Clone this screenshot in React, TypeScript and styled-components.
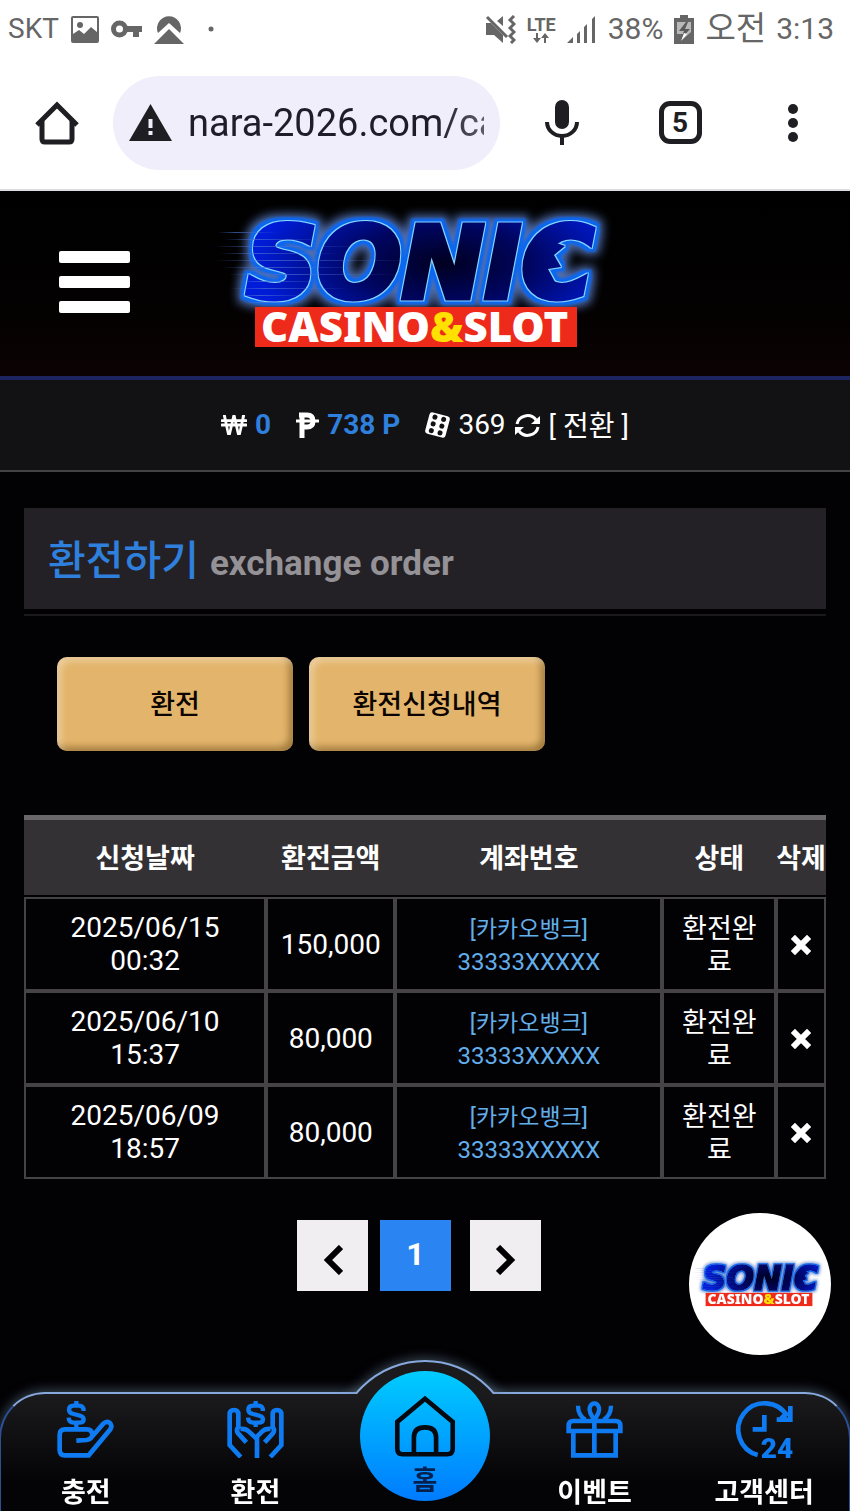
import React, { useId } from 'react';
import styled, { createGlobalStyle } from 'styled-components';
import { FaWonSign } from 'react-icons/fa';

const GlobalStyle = createGlobalStyle`
  *, *::before, *::after { box-sizing: border-box; }
  body {
    margin: 0;
    background: #020104;
    color: #fff;
    font-family: Roboto, "Noto Sans CJK KR", sans-serif;
    font-size: 28px;
  }
  button, input { font: inherit; color: inherit; }
  button { border: 0; padding: 0; background: none; cursor: pointer; }
  a { color: inherit; text-decoration: none; }
  svg { display: block; }
`;

/* ---------- phone status bar and browser toolbar ---------- */

const BrowserChrome = styled.header`
  background: #fff;
  border-bottom: 2px solid #dcdde0;
`;

const StatusBar = styled.div`
  display: flex;
  align-items: center;
  justify-content: space-between;
  height: 58px;
  padding: 0 16px 0 8px;
  color: #666;
  font-size: 30px;
  line-height: 58px;
`;

const StatusGroup = styled.div<{ $gap: number }>`
  display: flex;
  align-items: center;
  gap: ${(p) => p.$gap}px;
`;

const Carrier = styled.span`
  font-size: 28px;
`;

const NetworkType = styled.span`
  display: flex;
  flex-direction: column;
  align-items: center;
  font-size: 18px;
  font-weight: 700;
  line-height: 17px;
`;

const Clock = styled.span`
  display: flex;
  gap: 10px;
`;

const Meridiem = styled.span`
  font-size: 33px;
`;

const Toolbar = styled.div`
  display: flex;
  align-items: center;
  height: 131px;
  padding-bottom: 2px;
  color: #1f1f23;
`;

const ToolButton = styled.button<{ $width: number }>`
  display: flex;
  flex: none;
  align-items: center;
  justify-content: center;
  width: ${(p) => p.$width}px;
  height: 94px;
`;

const AddressBar = styled.div`
  display: flex;
  flex: 1;
  align-items: center;
  gap: 16px;
  min-width: 0;
  height: 94px;
  padding: 0 16px;
  border-radius: 47px;
  background: #efeefa;
`;

const AddressInput = styled.input`
  flex: 1;
  min-width: 0;
  height: 60px;
  padding: 0;
  border: 0;
  outline: 0;
  background: none;
  color: #1f1d2b;
  font-size: 38px;
  mask-image: linear-gradient(to right, #000 84%, rgba(0, 0, 0, 0.7));
`;

const TabCount = styled.span`
  display: flex;
  align-items: center;
  justify-content: center;
  width: 43px;
  height: 43px;
  border: 5px solid #1f1f23;
  border-radius: 11px;
  font-size: 28px;
  font-weight: 700;
  line-height: 32px;
`;

/* ---------- site header ---------- */

const SiteHeader = styled.div`
  display: grid;
  grid-template-columns: 1fr auto 1fr;
  align-items: center;
  height: 189px;
  border-bottom: 4px solid #1d2560;
  background: linear-gradient(#000, #030101 60%, #0b0203);
`;

const MenuButton = styled.button`
  display: flex;
  flex-direction: column;
  gap: 13px;
  width: 71px;
  margin: 0 0 4px 59px;
`;

const MenuLine = styled.span`
  height: 12px;
  border-radius: 2px;
  background: #fff;
`;

const BalanceBar = styled.div`
  display: flex;
  align-items: center;
  justify-content: center;
  gap: 25px;
  height: 92px;
  border-bottom: 2px solid #444245;
  background: #121214;
  line-height: 40px;
`;

const Balance = styled.span`
  display: flex;
  align-items: center;
  gap: 8px;
`;

const Amount = styled.strong`
  color: #2f7fdd;
`;

const Convert = styled.button`
  padding-top: 3px;
  font-size: 28px;
`;

/* ---------- page content ---------- */

const Content = styled.main`
  padding: 36px 24px 220px;
`;

const TitleWrap = styled.div`
  padding-bottom: 5px;
  border-bottom: 2px solid #1b191c;
`;

const Title = styled.h1`
  display: flex;
  align-items: baseline;
  gap: 11px;
  height: 101px;
  margin: 0;
  padding: 3px 24px 0;
  background: #232125;
  color: #2f7fdd;
  font-size: 41px;
  font-weight: 500;
  line-height: 101px;
`;

const Subtitle = styled.small`
  color: #949296;
  font-size: 35px;
  font-weight: 700;
`;

const Actions = styled.div`
  display: flex;
  gap: 16px;
  padding: 41px 33px 64px;
`;

const ActionButton = styled.button`
  width: 236px;
  height: 94px;
  padding-bottom: 4px;
  border-radius: 10px;
  background: #e3b56c;
  box-shadow: inset 4px 4px 7px rgba(255, 255, 255, 0.35), inset -4px -4px 7px rgba(80, 50, 0, 0.45);
  color: #0b0400;
  font-size: 27px;
  font-weight: 500;
`;

const HistoryTable = styled.table`
  width: 100%;
  table-layout: fixed;
  border-collapse: separate;
  border-spacing: 0;
  text-align: center;
  line-height: 33px;
`;

const Column = styled.col<{ $share: number }>`
  width: ${(p) => p.$share}%;
`;

const HeadCell = styled.th`
  height: 82px;
  padding: 3px 0 0;
  border-top: 5px solid #69676a;
  border-bottom: 2px solid #020104;
  background: #343135;
  font-size: 27px;
  font-weight: 700;
  white-space: nowrap;
`;

const Cell = styled.td`
  height: 94px;
  padding: 0 12px;
  border: 2px solid #454346;
`;

const StatusCell = styled(Cell)`
  padding-top: 3px;
  font-size: 27px;
  word-break: break-all;
`;

const Account = styled.span`
  display: block;
  padding-top: 4px;
  color: #62aeea;
  font-size: 24px;
`;

const BankName = styled.span`
  display: block;
  font-size: 23px;
`;

const DeleteCell = styled(Cell)`
  padding: 2px 0 0;
`;

const DeleteButton = styled.button`
  display: block;
  margin: 0 auto;
`;

const Pagination = styled.nav`
  display: flex;
  justify-content: center;
  gap: 12px;
  padding: 41px 12px 0 0;
`;

const PageButton = styled.button<{ $current?: boolean }>`
  display: flex;
  align-items: center;
  justify-content: center;
  width: 71px;
  height: 71px;
  padding-bottom: ${(p) => (p.$current ? 3 : 0)}px;
  background: ${(p) => (p.$current ? '#2a84f2' : '#f0eef1')};
  color: ${(p) => (p.$current ? '#fff' : '#000')};
  font-size: 32px;
  font-weight: 700;

  &:last-child { margin-left: 7px; }
  svg { margin-top: 8px; }
`;

/* ---------- floating parts ---------- */

const FloatingLogo = styled.a`
  position: fixed;
  right: 19px;
  bottom: 156px;
  display: flex;
  align-items: center;
  justify-content: center;
  width: 142px;
  height: 142px;
  padding: 2px 0 0 4px;
  border-radius: 50%;
  background: #fff;
`;

const BottomNav = styled.nav`
  position: fixed;
  right: -1px;
  bottom: 0;
  left: -1px;
  display: grid;
  grid-template-columns: repeat(5, 1fr);
  height: 119px;
  border: 2px solid #2d4f94;
  border-top-color: #86a8dc;
  border-bottom: 0;
  border-radius: 46px 46px 0 0;
  background: linear-gradient(#1b1b1d, #040406 75%);
  box-shadow: 0 -2px 12px rgba(110, 140, 160, 0.5);

  &::before {
    content: '';
    position: absolute;
    top: -34px;
    left: 50%;
    width: 180px;
    height: 180px;
    margin-left: -90px;
    border: 2px solid #86a8dc;
    border-radius: 50%;
    background: #1b1b1d;
    box-shadow: 0 -2px 12px rgba(110, 140, 160, 0.5);
    clip-path: inset(-20px -20px 146px -20px);
  }
`;

const NavItem = styled.a`
  display: flex;
  flex-direction: column;
  align-items: center;
  gap: 15px;
  padding-top: 7px;
  color: #0f7bf2;
`;

const NavLabel = styled.span`
  color: #fff;
  font-size: 27px;
  font-weight: 700;
  line-height: 40px;
  white-space: nowrap;
`;

const HomeItem = styled.a`
  position: relative;
  display: flex;
  flex-direction: column;
  align-items: center;
  justify-self: center;
  width: 130px;
  height: 130px;
  margin-top: -23px;
  padding-top: 25px;
  border-radius: 50%;
  background: linear-gradient(#00ccff, #007bff);
  color: #06090f;
`;

const HomeLabel = styled.span`
  margin-top: 4px;
  color: #06204d;
  font-size: 27px;
  font-weight: 700;
  line-height: 40px;
`;

/* ---------- logo ---------- */

const streaks = [
  [4, 18, 60], [10, 25, 100], [0, 32, 150], [6, 39, 120], [0, 46, 200],
  [8, 53, 140], [14, 60, 170], [22, 67, 90], [16, 74, 120], [24, 81, 70], [30, 88, 60],
];

function Logo({ width, label }: { width: number; label: string }) {
  const id = useId().replace(/[^a-zA-Z0-9]/g, '');
  const body = `url(#${id}f)`;
  return (
    <svg width={width} viewBox="0 0 422 140" role="img" aria-label={label} overflow="visible">
      <defs>
        <radialGradient id={`${id}f`} gradientUnits="userSpaceOnUse" cx="230" cy="50" r="190" gradientTransform="translate(0 27) scale(1 0.45)">
          <stop offset="0" stopColor="#000020" />
          <stop offset="0.45" stopColor="#000560" />
          <stop offset="1" stopColor="#001cd8" />
        </radialGradient>
        <linearGradient id={`${id}s`} x1="0" x2="1">
          <stop offset="0" stopColor="#4b6fd0" stopOpacity="0" />
          <stop offset="0.3" stopColor="#4b6fd0" stopOpacity="0.7" />
          <stop offset="1" stopColor="#4b6fd0" stopOpacity="0" />
        </linearGradient>
        <filter id={`${id}g`} x="-10%" y="-40%" width="120%" height="180%" colorInterpolationFilters="sRGB">
          <feMorphology in="SourceAlpha" operator="dilate" radius="1" result="edge" />
          <feFlood floodColor="#86d8ff" />
          <feComposite in2="edge" operator="in" result="outline" />
          <feMorphology in="SourceAlpha" operator="dilate" radius="4" result="wide" />
          <feGaussianBlur in="wide" stdDeviation="1" result="wideSoft" />
          <feFlood floodColor="#0b66f0" />
          <feComposite in2="wideSoft" operator="in" result="band" />
          <feMorphology in="SourceAlpha" operator="dilate" radius="7" result="far" />
          <feGaussianBlur in="far" stdDeviation="5" result="farSoft" />
          <feFlood floodColor="#5c80cc" floodOpacity="0.85" />
          <feComposite in2="farSoft" operator="in" result="glow" />
          <feMerge>
            <feMergeNode in="glow" />
            <feMergeNode in="band" />
            <feMergeNode in="outline" />
            <feMergeNode in="SourceGraphic" />
          </feMerge>
        </filter>
      </defs>
      <g fill={body} filter={`url(#${id}g)`}>
        <text x="32" y="84" fontFamily='"DejaVu Sans", sans-serif' fontSize="99" fontWeight="700" fontStyle="italic" stroke={body} strokeWidth="5">SONIC</text>
        <path d="M334 26L351 32L340 41L347 53L334 55L341 68L326 66Z" />
      </g>
      {streaks.map(([x, y, w]) => (
        <rect key={y} x={x} y={y} width={w} height="1" fill={`url(#${id}s)`} />
      ))}
      <rect x="41" y="93" width="322" height="40" fill="#ee2a1b" />
      <text x="47" y="128" fontFamily='"Noto Sans", sans-serif' fontSize="42" fontWeight="900" fill="#fff">
        CASINO<tspan fill="#ffe000">&amp;</tspan>SLOT
      </text>
    </svg>
  );
}

/* ---------- icons ---------- */

const line = { fill: 'none', stroke: 'currentColor' };

const PictureIcon = () => (
  <svg width="28" height="27" viewBox="0 0 28 27">
    <rect x="1" y="1" width="26" height="25" rx="1" {...line} strokeWidth="2" />
    <circle cx="9" cy="9" r="3" fill="currentColor" />
    <path d="M2 18l6-4 5 4 7-7 6 5v9H2z" fill="currentColor" />
  </svg>
);

const KeyIcon = () => (
  <svg width="31" height="18" viewBox="0 0 31 18">
    <circle cx="8.500" cy="9" r="6" {...line} strokeWidth="5" />
    <path d="M14 6h17v6h-3v5h-6v-5h-8z" fill="currentColor" />
  </svg>
);

const PeakIcon = () => (
  <svg width="30" height="29" viewBox="0 0 30 29">
    <path d="M4 18A12 12 0 1 1 26 18L15 8z" fill="currentColor" />
    <path d="M15 14l15 15H0z" fill="currentColor" />
  </svg>
);

const DotIcon = () => (
  <svg width="30" height="6" viewBox="0 0 30 6">
    <circle cx="15" cy="3" r="2.500" fill="currentColor" />
  </svg>
);

const MutedIcon = () => (
  <svg width="31" height="29" viewBox="0 0 31 29">
    <path d="M1 8h5l12 12v8l-9-8H1zM18 1v10l-6-5z" fill="currentColor" />
    <path d="M2 2l20 20" {...line} strokeWidth="3" />
    <path d="M29 1l-4 4 4 4-4 4 4 4-4 4 4 4-3 3" {...line} strokeWidth="3" />
  </svg>
);

const DataArrows = () => (
  <svg width="16" height="10" viewBox="0 0 16 10">
    <path d="M3 0h2v5h3l-4 5-4-5h3zM11 10h2V5h3l-4-5-4 5h3z" fill="currentColor" />
  </svg>
);

const SignalIcon = () => (
  <svg width="30" height="28" viewBox="0 0 30 28">
    <path d="M0 28l6-6v6zM10 19l3-3v12h-3zM17 12l3-3v19h-3zM25 4l3-3v27h-3z" fill="currentColor" />
  </svg>
);

const BatteryIcon = () => (
  <svg width="20" height="29" viewBox="0 0 20 29">
    <path d="M6 0h8v3h6v26H0V3h6z" fill="currentColor" />
    <path d="M3 7h14v10l-9 8 2-6H3z" fill="#b9b9b9" />
    <path d="M12 7L5 16h5l-3 8 9-10h-5l3-7z" fill="#5a5a5a" />
    <path d="M10 18l-3 8 6-7z" fill="#fff" />
  </svg>
);

const BrowserHomeIcon = () => (
  <svg width="44" height="44" viewBox="0 0 44 44">
    <path d="M2 24L22 4l20 20" {...line} strokeWidth="5" />
    <path d="M7 20v18q0 3 3 3h24q3 0 3-3V20" {...line} strokeWidth="5" />
  </svg>
);

const WarningIcon = () => (
  <svg width="43" height="37" viewBox="0 0 43 37">
    <path d="M21.500 0L43 37H0z" fill="currentColor" />
    <path d="M21.500 15v9M21.500 27v4" stroke="#efeefa" strokeWidth="4" />
  </svg>
);

const MicIcon = () => (
  <svg width="34" height="46" viewBox="0 0 34 46">
    <rect x="10" y="0" width="14" height="29" rx="7" fill="currentColor" />
    <path d="M2 22a15 14 0 0 0 30 0M17 36v9" {...line} strokeWidth="4" />
  </svg>
);

const MoreIcon = () => (
  <svg width="10" height="40" viewBox="0 0 10 40">
    <circle cx="5" cy="6" r="5" fill="currentColor" />
    <circle cx="5" cy="20" r="5" fill="currentColor" />
    <circle cx="5" cy="34" r="5" fill="currentColor" />
  </svg>
);

const PesoIcon = () => (
  <svg width="23" height="26" viewBox="0 0 23 26">
    <path d="M6 26V3M3 3h8q6 0 6 6t-6 6H6" {...line} strokeWidth="5" />
    <path d="M0 9h23" {...line} strokeWidth="3" />
  </svg>
);

const DiceIcon = () => (
  <svg width="25" height="26" viewBox="0 0 25 26">
    <g transform="rotate(15 12.500 13)">
      <rect x="2" y="2" width="21" height="22" rx="3" fill="currentColor" />
      {[6, 13, 20].map((y) => (
        <g key={y} fill="#121214">
          <circle cx="8" cy={y} r="2.500" />
          <circle cx="17" cy={y} r="2.500" />
        </g>
      ))}
    </g>
  </svg>
);

const RefreshIcon = () => (
  <svg width="27" height="25" viewBox="0 0 27 25">
    <path d="M3 11A10.500 10 0 0 1 22 7M24 14A10.500 10 0 0 1 5 18" {...line} strokeWidth="3" />
    <path d="M26 3v8h-9zM1 22v-8h9z" fill="currentColor" />
  </svg>
);

const CrossIcon = () => (
  <svg width="20" height="20" viewBox="0 0 20 20">
    <path d="M4 4l12 12M16 4L4 16" {...line} strokeWidth="6" strokeLinecap="square" />
  </svg>
);

const Chevron = ({ flip }: { flip?: boolean }) => (
  <svg width="20" height="30" viewBox="0 0 20 30">
    <path d={flip ? 'M2 2l13 13L2 28' : 'M18 2L5 15l13 13'} {...line} strokeWidth="6" />
  </svg>
);

const DepositIcon = () => (
  <svg width="57" height="57" viewBox="0 0 171 171">
    <g {...line} strokeWidth="14">
      <path d="M58 119l30-2q17-2 18-16-2-16-16-16H24Q8 85 8 101v46q0 16 16 16h71l65-78q7-12-2-20-10-6-19 3l-33 38" />
      <path d="M58 0v14M58 64v22M80 30q0-16-14-16H50Q36 14 36 26q0 10 14 13l16 4q14 3 14 12 0 10-14 10H50q-14 0-15-15" strokeWidth="13" />
    </g>
  </svg>
);

const WithdrawIcon = () => (
  <svg width="57" height="57" viewBox="0 0 171 171">
    <g {...line} strokeWidth="14">
      <path d="M41 168L8 132V40q0-13 13-13t13 13v42M34 78q-8 10 0 20l24 26M40 84q16-2 26 8l24 22v57" />
      <path d="M130 168l33-36V40q0-13-13-13t-13 13v42M137 78q8 10 0 20l-24 26M131 84q-16-2-26 8l-18 18" />
      <path d="M86 0v14M86 64v14M108 30q0-16-14-16H78q-14 0-14 12 0 10 14 13l16 4q14 3 14 12 0 10-14 10H78q-14 0-15-15" strokeWidth="13" />
    </g>
  </svg>
);

const NavHomeIcon = () => (
  <svg width="66" height="66" viewBox="0 0 66 66">
    <g {...line} strokeWidth="5">
      <path d="M33 3L3 28v29q0 6 6 6h48q6 0 6-6V28z" />
      <path d="M21 63V45q0-11 12-11t12 11v18" />
    </g>
  </svg>
);

const GiftIcon = () => (
  <svg width="57" height="57" viewBox="0 0 171 171">
    <g {...line} strokeWidth="14">
      <path d="M8 90V74q0-14 14-14h127q14 0 14 14v16z" />
      <path d="M22 90v73h127V90M85 54v109" />
      <path d="M85 56Q68 34 71 20q4-13 14-13t14 13q3 14-14 36" strokeWidth="13" />
      <path d="M36 14q0 28 22 42M135 14q0 28-22 42" strokeWidth="13" />
    </g>
  </svg>
);

const SupportIcon = () => (
  <svg width="57" height="57" viewBox="0 0 171 171" overflow="visible">
    <g {...line} strokeWidth="14">
      <path d="M65 162A79 79 0 1 1 154 46" />
      <path d="M163 15v41h-41M154 34l-18 18M85 42v43H50" />
    </g>
    <text x="74" y="170" fill="currentColor" fontFamily="Roboto, sans-serif" fontSize="84" fontWeight="900">24</text>
  </svg>
);

/* ---------- data ---------- */

const rows = [
  { date: '2025/06/15', time: '00:32', amount: '150,000' },
  { date: '2025/06/10', time: '15:37', amount: '80,000' },
  { date: '2025/06/09', time: '18:57', amount: '80,000' },
];

const columns = [
  { label: '신청날짜', share: 30.2 },
  { label: '환전금액', share: 16.1 },
  { label: '계좌번호', share: 33.3 },
  { label: '상태', share: 14.2 },
  { label: '삭제', share: 6.2 },
];

export default function App() {
  return (
    <>
      <GlobalStyle />
      <BrowserChrome>
        <StatusBar>
          <StatusGroup $gap={12}>
            <Carrier>SKT</Carrier>
            <PictureIcon />
            <KeyIcon />
            <PeakIcon />
            <DotIcon />
          </StatusGroup>
          <StatusGroup $gap={11}>
            <MutedIcon />
            <NetworkType>
              LTE
              <DataArrows />
            </NetworkType>
            <SignalIcon />
            <span>38%</span>
            <BatteryIcon />
            <Clock><Meridiem>오전</Meridiem><span>3:13</span></Clock>
          </StatusGroup>
        </StatusBar>
        <Toolbar>
          <ToolButton $width={113} aria-label="Home"><BrowserHomeIcon /></ToolButton>
          <AddressBar>
            <WarningIcon />
            <AddressInput aria-label="Address" defaultValue="nara-2026.com/ca" />
          </AddressBar>
          <ToolButton $width={124} aria-label="Voice search"><MicIcon /></ToolButton>
          <ToolButton $width={112} aria-label="Tabs"><TabCount>5</TabCount></ToolButton>
          <ToolButton $width={114} aria-label="More"><MoreIcon /></ToolButton>
        </Toolbar>
      </BrowserChrome>

      <SiteHeader>
        <MenuButton aria-label="메뉴">
          <MenuLine />
          <MenuLine />
          <MenuLine />
        </MenuButton>
        <a href="#home"><Logo width={422} label="Sonic Casino & Slot" /></a>
      </SiteHeader>
      <BalanceBar>
        <Balance><FaWonSign size={26} /><Amount>0</Amount></Balance>
        <Balance><PesoIcon /><Amount>738 P</Amount></Balance>
        <Balance>
          <DiceIcon />
          <span>369</span>
          <RefreshIcon />
          <Convert>[ 전환 ]</Convert>
        </Balance>
      </BalanceBar>

      <Content>
        <TitleWrap>
          <Title>환전하기<Subtitle>exchange order</Subtitle></Title>
        </TitleWrap>
        <Actions>
          <ActionButton>환전</ActionButton>
          <ActionButton>환전신청내역</ActionButton>
        </Actions>
        <HistoryTable>
          <colgroup>
            {columns.map((c) => <Column key={c.label} $share={c.share} />)}
          </colgroup>
          <thead>
            <tr>
              {columns.map((c) => <HeadCell key={c.label} scope="col">{c.label}</HeadCell>)}
            </tr>
          </thead>
          <tbody>
            {rows.map((row) => (
              <tr key={row.date}>
                <Cell>{row.date}<br />{row.time}</Cell>
                <Cell>{row.amount}</Cell>
                <Cell>
                  <Account><BankName>[카카오뱅크]</BankName>33333XXXXX</Account>
                </Cell>
                <StatusCell>환전완료</StatusCell>
                <DeleteCell>
                  <DeleteButton aria-label="삭제"><CrossIcon /></DeleteButton>
                </DeleteCell>
              </tr>
            ))}
          </tbody>
        </HistoryTable>
        <Pagination aria-label="페이지">
          <PageButton aria-label="이전"><Chevron /></PageButton>
          <PageButton $current aria-current="page">1</PageButton>
          <PageButton aria-label="다음"><Chevron flip /></PageButton>
        </Pagination>
      </Content>

      <FloatingLogo href="#home"><Logo width={140} label="Sonic Casino & Slot" /></FloatingLogo>
      <BottomNav>
        <NavItem href="#deposit"><DepositIcon /><NavLabel>충전</NavLabel></NavItem>
        <NavItem href="#withdraw"><WithdrawIcon /><NavLabel>환전</NavLabel></NavItem>
        <HomeItem href="#home"><NavHomeIcon /><HomeLabel>홈</HomeLabel></HomeItem>
        <NavItem href="#event"><GiftIcon /><NavLabel>이벤트</NavLabel></NavItem>
        <NavItem href="#support"><SupportIcon /><NavLabel>고객센터</NavLabel></NavItem>
      </BottomNav>
    </>
  );
}
